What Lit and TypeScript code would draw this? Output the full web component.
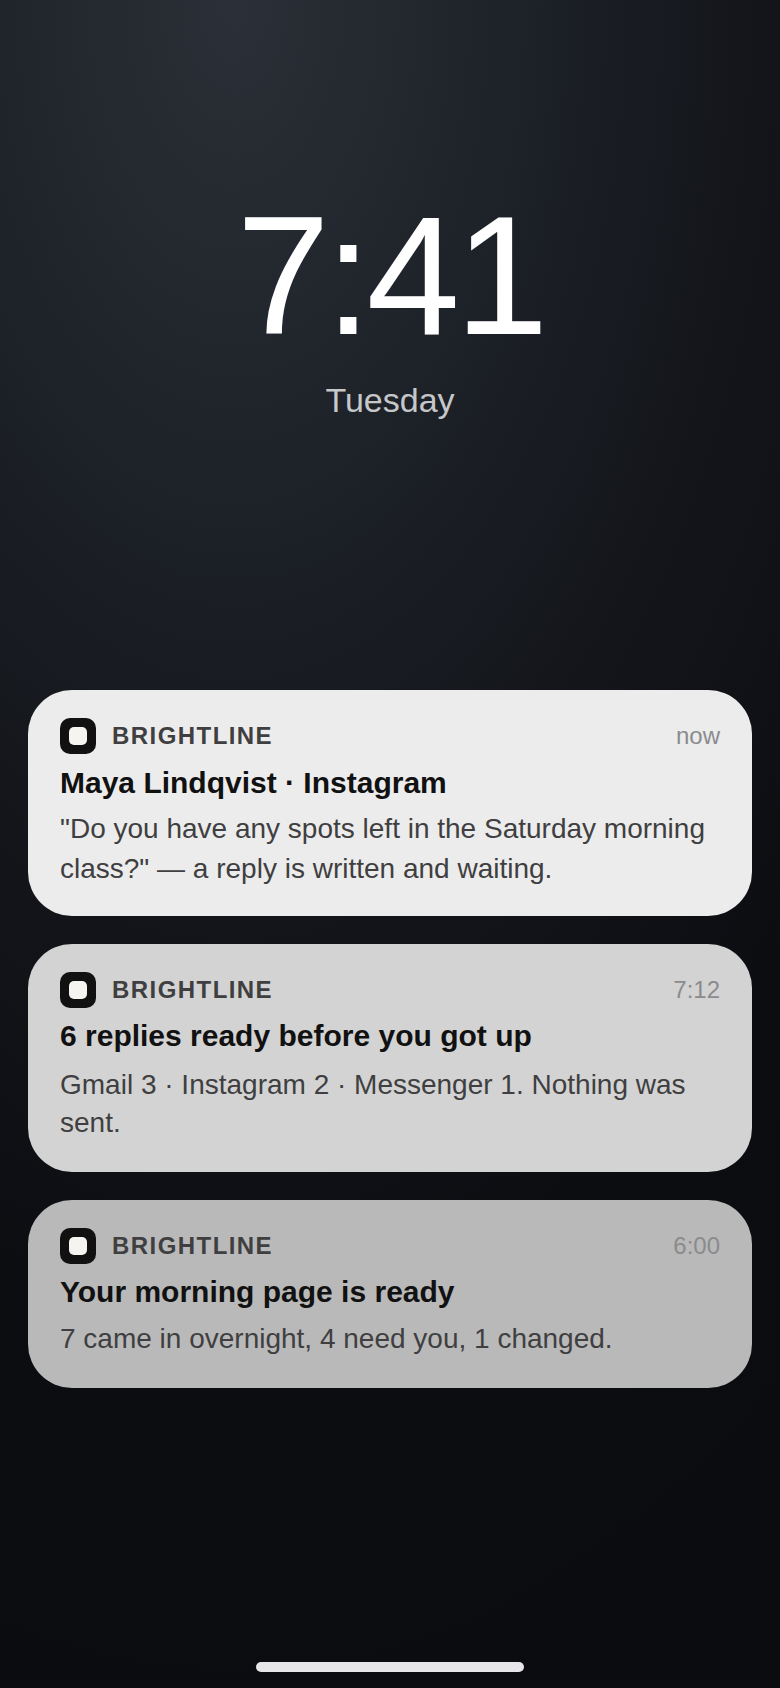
import { LitElement, html, css } from "lit";
import { customElement } from "lit/decorators.js";

const cards = [
  { cls: "a", time: "now", title: "Maya Lindqvist · Instagram", body: `"Do you have any spots left in the Saturday morning class?" — a reply is written and waiting.` },
  { cls: "b", time: "7:12", title: "6 replies ready before you got up", body: "Gmail 3 · Instagram 2 · Messenger 1. Nothing was sent." },
  { cls: "c", time: "6:00", title: "Your morning page is ready", body: "7 came in overnight, 4 need you, 1 changed." },
];

@customElement("app-root")
export class AppRoot extends LitElement {
  static styles = css`
    :host { display: block; }
    .screen {
      width: 780px; height: 1688px; box-sizing: border-box; overflow: hidden;
      display: flex; flex-direction: column; align-items: center;
      font-family: "Liberation Sans", Arial, sans-serif;
      background: radial-gradient(125% 100% at 30% 0%, #2b3038 0%, #1d2128 30%, #14161b 52%, #0b0d11 80%, #0a0c10 100%);
    }
    .clock { margin-top: 182px; font-size: 168px; line-height: 188px; letter-spacing: -5px; color: #fff; font-weight: 400; }
    .day { margin-top: 10px; font-size: 34px; line-height: 40px; color: rgba(255,255,255,.75); }
    .stack { margin-top: 270px; width: 724px; display: flex; flex-direction: column; gap: 28px; }
    .card { border-radius: 44px; padding: 28px 32px; box-sizing: border-box; }
    .a { background: #ececec; height: 226px; }
    .b { background: #d3d3d3; height: 228px; }
    .c { background: #b9b9b9; height: 188px; }
    .head { display: flex; align-items: center; height: 36px; }
    .icon { width: 36px; height: 36px; border-radius: 10px; background: #111; display: flex; align-items: center; justify-content: center; flex: none; }
    .icon i { display: block; width: 18px; height: 18px; border-radius: 5px; background: #f5f4f0; }
    .brand { margin-left: 16px; flex: 1; font-size: 24px; font-weight: 700; letter-spacing: 1.44px; color: #3f3f41; }
    .time { font-size: 24px; color: #8b8b8d; }
    .title { margin-top: 10px; font-size: 30px; line-height: 38px; font-weight: 700; color: #111; }
    .body { margin-top: 7px; font-size: 28px; line-height: 40px; color: #3f3f41; }
    .b .title { margin-top: 9px; }
    .b .body { margin-top: 11px; line-height: 38px; }
    .c .title { margin-top: 9px; }
    .c .body { margin-top: 9px; line-height: 38px; }
    .bar { position: absolute; left: 256px; top: 1662px; width: 268px; height: 10px; border-radius: 5px; background: #e6e6e8; }
  `;
  render() {
    return html`<div class="screen">
      <div class="clock">7:41</div>
      <div class="day">Tuesday</div>
      <div class="stack">
        ${cards.map(c => html`<div class="card ${c.cls}">
          <div class="head"><span class="icon"><i></i></span><span class="brand">BRIGHTLINE</span><span class="time">${c.time}</span></div>
          <div class="title">${c.title}</div>
          <div class="body">${c.body}</div>
        </div>`)}
      </div>
      <div class="bar"></div>
    </div>`;
  }
}
